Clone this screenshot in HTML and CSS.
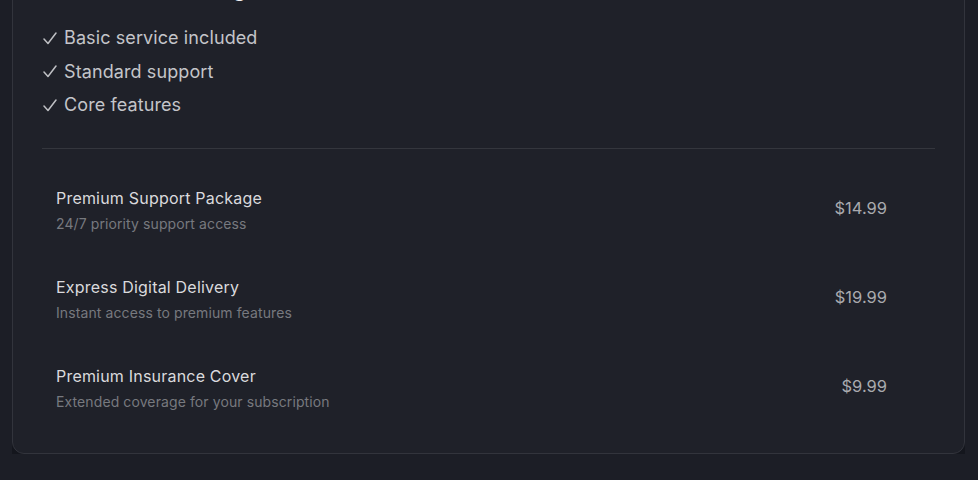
FILE: index.html
```html
<!DOCTYPE html>
<html lang="en">
<head>
    <meta charset="UTF-8">
    <meta name="viewport" content="width=device-width, initial-scale=1.0">
    <title>Plan Coverage</title>
    <link rel="stylesheet" href="styles.css">
</head>
<body>
    <div class="page">
        <main class="main">
            <!-- coverage card -->
            <section class="card">
                <h2 class="card-title">Basic Plan Coverage</h2>
                <ul class="check-list">
                    <li><svg class="check" viewBox="0 0 14 13"><polyline points="1,7 5,11.5 13,1"/></svg>Basic service included</li>
                    <li><svg class="check" viewBox="0 0 14 13"><polyline points="1,7 5,11.5 13,1"/></svg>Standard support</li>
                    <li><svg class="check" viewBox="0 0 14 13"><polyline points="1,7 5,11.5 13,1"/></svg>Core features</li>
                </ul>
                <hr class="divider">
                <ul class="addon-list">
                    <li class="addon-item">
                        <div class="addon-info">
                            <p class="addon-name">Premium Support Package</p>
                            <p class="addon-desc">24/7 priority support access</p>
                        </div>
                        <span class="addon-price">$14.99</span>
                    </li>
                    <li class="addon-item">
                        <div class="addon-info">
                            <p class="addon-name">Express Digital Delivery</p>
                            <p class="addon-desc">Instant access to premium features</p>
                        </div>
                        <span class="addon-price">$19.99</span>
                    </li>
                    <li class="addon-item">
                        <div class="addon-info">
                            <p class="addon-name">Premium Insurance Cover</p>
                            <p class="addon-desc">Extended coverage for your subscription</p>
                        </div>
                        <span class="addon-price">$9.99</span>
                    </li>
                </ul>
            </section>
        </main>
    </div>
</body>
</html>
```

FILE: styles.css
```css
/*global*/
* {
    margin: 0;
    padding: 0;
    box-sizing: border-box;
}

body {
    background-color: #1c1e26;
    font-family: Inter, "Noto Sans", sans-serif;
    -webkit-font-smoothing: antialiased;
}

ul {
    list-style: none;
}

/*layout*/
.page {
    min-height: 480px;
    padding: 0 13px 0 12px;
}

.main {
    min-height: 480px;
    background-color: #14161d;
}

/*card*/
.card {
    margin-top: -59px;
    padding: 30px 29px 25px;
    background-color: #1f2129;
    border: 1px solid #32343c;
    border-radius: 12px;
}

.card-title {
    font-size: 22px;
    line-height: 32px;
    font-weight: 600;
    color: #f0f0f2;
    margin-bottom: 17px;
}

.check-list li {
    display: flex;
    align-items: center;
    font-size: 18px;
    line-height: 33.5px;
    color: #c4c5c9;
    letter-spacing: 0.1px;
}

.check {
    width: 14px;
    height: 13px;
    margin: 1px 7px 0 1px;
    fill: none;
    stroke: #bfc0c4;
    stroke-width: 1.5;
    stroke-linecap: round;
    stroke-linejoin: round;
}

.divider {
    border: none;
    border-top: 1px solid #34363d;
    margin: 26px 0 22px;
}

/*add-ons*/
.addon-list {
    display: flex;
    flex-direction: column;
    gap: 10px;
}

.addon-item {
    display: flex;
    align-items: center;
    justify-content: space-between;
    padding: 15px 48px 16px 14px;
}

.addon-name {
    font-size: 16px;
    line-height: 24px;
    color: #dadadd;
    letter-spacing: 0.2px;
}

.addon-desc {
    margin-top: 4px;
    font-size: 14px;
    line-height: 20px;
    color: #77797f;
    letter-spacing: 0.1px;
}

.addon-price {
    margin-bottom: 4px;
    font-size: 16.5px;
    color: #a9aaae;
}
```
